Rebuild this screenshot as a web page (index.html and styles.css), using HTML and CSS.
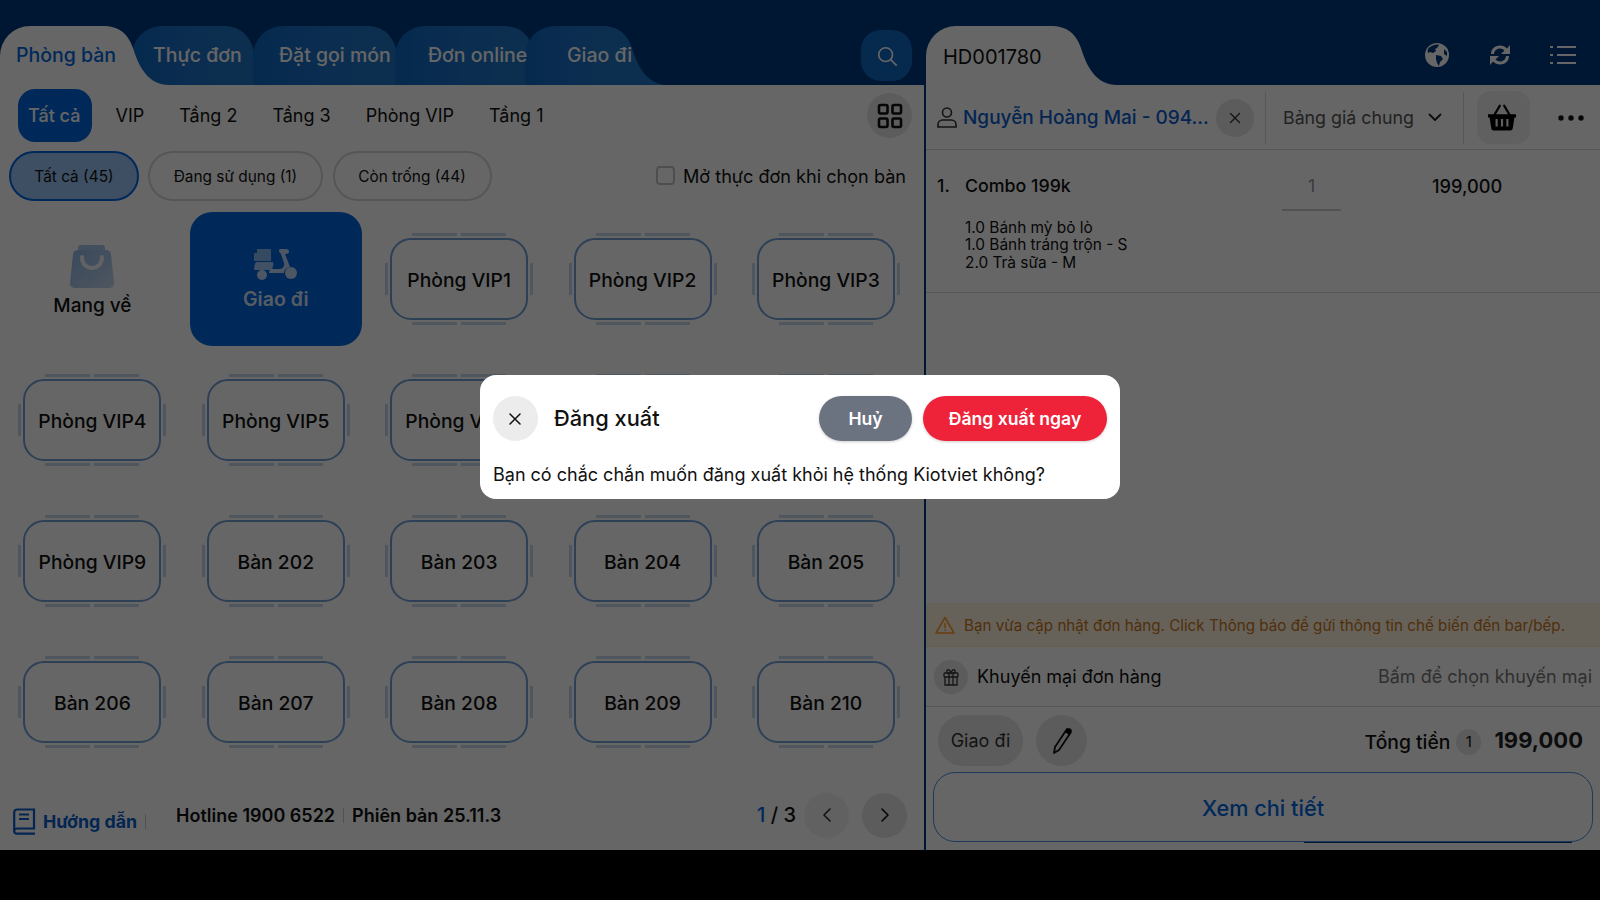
FILE: index.html
```html
<!DOCTYPE html>
<html lang="vi">
<head>
  <meta charset="UTF-8">
  <meta name="viewport" content="width=device-width, initial-scale=1">
  <title>Đăng xuất</title>
  <link rel="stylesheet" href="styles.css">
</head>
<body>
  <div class="app">
    <section class="left">
      <header class="topbar">
        <nav class="tabs">
          <a class="tab tab-active tab-room"><span>Phòng bàn</span><svg class="tab-cap" viewBox="0 0 67 59"><path d="M0 0C18 0 26 8 31 22C37 42 47 59 67 59L0 59Z"/></svg></a>
          <a class="tab tab-menu"><span>Thực đơn</span><svg class="tab-cap" viewBox="0 0 67 59"><path d="M0 0C18 0 26 8 31 22C37 42 47 59 67 59L0 59Z"/></svg></a>
          <a class="tab tab-order"><span>Đặt gọi món</span><svg class="tab-cap" viewBox="0 0 67 59"><path d="M0 0C18 0 26 8 31 22C37 42 47 59 67 59L0 59Z"/></svg></a>
          <a class="tab tab-online"><span>Đơn online</span><svg class="tab-cap" viewBox="0 0 67 59"><path d="M0 0C18 0 26 8 31 22C37 42 47 59 67 59L0 59Z"/></svg></a>
          <a class="tab tab-delivery"><span>Giao đi</span><svg class="tab-cap" viewBox="0 0 67 59"><path d="M0 0C18 0 26 8 31 22C37 42 47 59 67 59L0 59Z"/></svg></a>
        </nav>
        <button class="search-btn">
          <svg width="22" height="22" viewBox="0 0 24 24" fill="none" stroke="#fff" stroke-width="1.8" stroke-linecap="round"><circle cx="10.5" cy="10.5" r="7.5"/><path d="M16 16l6 6"/></svg>
        </button>
      </header>

      <div class="floors">
        <a class="floor floor-active">Tất cả</a>
        <a class="floor">VIP</a>
        <a class="floor">Tầng 2</a>
        <a class="floor">Tầng 3</a>
        <a class="floor">Phòng VIP</a>
        <a class="floor">Tầng 1</a>
        <button class="grid-btn">
          <svg width="26" height="26" viewBox="0 0 26 26" fill="none" stroke="#111" stroke-width="2.6"><rect x="2" y="2" width="8.5" height="8.5" rx="1.5"/><rect x="15.5" y="2" width="8.5" height="8.5" rx="1.5"/><rect x="2" y="15.5" width="8.5" height="8.5" rx="1.5"/><rect x="15.5" y="15.5" width="8.5" height="8.5" rx="1.5"/></svg>
        </button>
      </div>

      <div class="filters">
        <a class="chip chip-active chip-all">Tất cả (45)</a>
        <a class="chip chip-used">Đang sử dụng (1)</a>
        <a class="chip chip-free">Còn trống (44)</a>
        <label class="open-menu"><span class="checkbox"></span>Mở thực đơn khi chọn bàn</label>
      </div>

      <div class="tables">
        <div class="cell cell-takeaway">
          <svg width="44" height="43" viewBox="0 0 44 43">
            <defs><linearGradient id="bag" x1="0" y1="0" x2="1" y2="1"><stop offset="0" stop-color="#8fb6e6"/><stop offset="1" stop-color="#c4d6ec"/></linearGradient></defs>
            <path d="M8 8V3a3 3 0 0 1 3-3h21a3 3 0 0 1 3 3v5z" fill="#a9c6ea"/>
            <path d="M8 5h28a5 5 0 0 1 5 4.500L44 38a4.500 4.500 0 0 1-4.500 5H4.500A4.500 4.500 0 0 1 0 38L3 9.500A5 5 0 0 1 8 5z" fill="url(#bag)"/>
            <path d="M12 12c0 7 4.500 11 10 11s10-4 10-11" fill="none" stroke="#f2f5f9" stroke-width="4" stroke-linecap="round"/>
          </svg>
          <span>Mang về</span>
        </div>
        <div class="cell cell-delivery">
          <svg width="44" height="32" viewBox="0 0 44 32" fill="#fff" opacity=".75">
            <path d="M3 1h14v12H3z" opacity=".7"/>
            <path d="M0 5h3v8H0z" opacity=".7"/>
            <path d="M3 14h15c1 0 1.500 1 1.500 2L18 22H0c0-4 1-8 3-8z" opacity=".85"/>
            <circle cx="8" cy="27" r="5"/>
            <circle cx="37" cy="25" r="6"/>
            <path d="M27 1h5c2 0 3 1 3 2.500S34 6 32 6h-1l5 13-3 1c-2 1-3 3-3 5H15c0-2 1-3 2-4h9c3 0 5-3 4-6l-3-9c-1-1-2-2-2-3.500S26 1 27 1z"/>
          </svg>
          <span>Giao đi</span>
        </div>
        <div class="cell"><div class="table">Phòng VIP1</div></div>
        <div class="cell"><div class="table">Phòng VIP2</div></div>
        <div class="cell"><div class="table">Phòng VIP3</div></div>
        <div class="cell"><div class="table">Phòng VIP4</div></div>
        <div class="cell"><div class="table">Phòng VIP5</div></div>
        <div class="cell"><div class="table">Phòng VIP6</div></div>
        <div class="cell"><div class="table">Phòng VIP7</div></div>
        <div class="cell"><div class="table">Phòng VIP8</div></div>
        <div class="cell"><div class="table">Phòng VIP9</div></div>
        <div class="cell"><div class="table">Bàn 202</div></div>
        <div class="cell"><div class="table">Bàn 203</div></div>
        <div class="cell"><div class="table">Bàn 204</div></div>
        <div class="cell"><div class="table">Bàn 205</div></div>
        <div class="cell"><div class="table">Bàn 206</div></div>
        <div class="cell"><div class="table">Bàn 207</div></div>
        <div class="cell"><div class="table">Bàn 208</div></div>
        <div class="cell"><div class="table">Bàn 209</div></div>
        <div class="cell"><div class="table">Bàn 210</div></div>
      </div>

      <footer class="left-foot">
        <a class="guide">
          <svg width="23" height="27" viewBox="0 0 23 27" fill="none" stroke="#0a5ccc" stroke-width="2.200"><path d="M4 1.500h17v19H4a2.800 2.800 0 0 0-2.800 2.800V4.300A2.800 2.800 0 0 1 4 1.500z"/><path d="M1.200 23c0 1.500 1.300 2.700 2.800 2.700h18"/><path d="M6 6.500h10M6 11h10"/></svg>
          <span>Hướng dẫn</span>
        </a>
        <span class="pipe pipe-guide"></span>
        <span class="info">Hotline 1900 6522</span>
        <span class="pipe"></span>
        <span class="info">Phiên bản 25.11.3</span>
        <div class="pager">
          <span class="page-no"><b>1</b> / 3</span>
          <button class="page-btn page-prev"><svg width="12" height="18" viewBox="0 0 12 18" fill="none" stroke="#333" stroke-width="1.600" stroke-linecap="round" stroke-linejoin="round"><path d="M9 3L3 9l6 6"/></svg></button>
          <button class="page-btn"><svg width="12" height="18" viewBox="0 0 12 18" fill="none" stroke="#111" stroke-width="1.600" stroke-linecap="round" stroke-linejoin="round"><path d="M3 3l6 6-6 6"/></svg></button>
        </div>
      </footer>
    </section>

    <section class="right">
      <header class="topbar">
        <div class="bill-tab">HD001780<svg class="bill-cap" viewBox="0 0 67 59"><path d="M0 0C18 0 26 8 31 22C37 42 47 59 67 59L0 59Z"/></svg></div>
        <div class="top-icons">
          <svg width="26" height="26" viewBox="0 0 26 26"><circle cx="13" cy="13" r="12" fill="#fff"/><path d="M6 5c3-2 7-3 9-2l-2 3-2 1 1 2-3 2-3-1-2 1C3 8 4 6 6 5zM12 13l5 1 2 3-3 3-1 4-2-3-1-4zM20 7l3 3v4l-3-2z" fill="#003a80"/></svg>
          <svg width="26" height="26" viewBox="0 0 26 26" fill="#fff"><path d="M4 12C4 7 8 3.500 13 3.500c3 0 5 1 7 3L23 3v9h-9l3.500-3.500c-1.200-1.300-2.800-2-4.500-2-3.500 0-5.500 2.300-6 5.500zM22 14c0 5-4 8.500-9 8.500-3 0-5-1-7-3L3 23v-9h9l-3.500 3.500c1.200 1.300 2.800 2 4.500 2 3.500 0 5.500-2.300 6-5.500z"/></svg>
          <svg width="26" height="22" viewBox="0 0 26 22" fill="none" stroke="#fff" stroke-width="2"><path d="M7 3h19M7 11h19M7 19h19"/><path d="M0 3h3M0 11h3M0 19h3"/></svg>
        </div>
      </header>

      <div class="customer">
        <svg class="person" width="20" height="21" viewBox="0 0 20 21" fill="none" stroke="#333" stroke-width="1.600"><circle cx="10" cy="5.500" r="4.500"/><path d="M1 20v-2.500C1 15 3 13 5.500 13h9c2.500 0 4.500 2 4.500 4.500V20z"/></svg>
        <span class="cust-name">Nguyễn Hoàng Mai - 094...</span>
        <button class="cust-clear"><svg width="12" height="12" viewBox="0 0 12 12" stroke="#333" stroke-width="1.400" stroke-linecap="round"><path d="M1.500 1.500l9 9M10.500 1.500l-9 9"/></svg></button>
        <div class="price-book">
          <span>Bảng giá chung</span>
          <svg width="14" height="9" viewBox="0 0 14 9" fill="none" stroke="#222" stroke-width="1.800" stroke-linecap="round" stroke-linejoin="round"><path d="M1.500 1.500L7 7l5.500-5.500"/></svg>
        </div>
        <button class="basket-btn">
          <svg width="28" height="28" viewBox="0 0 26 26"><path d="M6 10l5-8.500M20 10l-5-8.500" stroke="#000" stroke-width="2" fill="none" stroke-linecap="round"/><path d="M0 9.500h26v3h-1.500l-1.500 10a2 2 0 0 1-2 2H5a2 2 0 0 1-2-2l-1.500-10H0z"/><path d="M8 14v7M13 14v7M18 14v7" stroke="#eee" stroke-width="2"/></svg>
        </button>
        <svg class="dots" width="26" height="6" viewBox="0 0 26 6" fill="#111"><circle cx="3" cy="3" r="2.700"/><circle cx="13" cy="3" r="2.700"/><circle cx="23" cy="3" r="2.700"/></svg>
      </div>

      <div class="order-line">
        <div class="line-main">
          <span class="line-no">1.</span>
          <span class="line-name">Combo 199k</span>
          <span class="line-qty">1</span>
          <span class="line-price">199,000</span>
        </div>
        <div class="line-sub">
          <div>1.0 Bánh mỳ bỏ lò</div>
          <div>1.0 Bánh tráng trộn - S</div>
          <div>2.0 Trà sữa - M</div>
        </div>
      </div>

      <div class="order-space"></div>

      <div class="notice">
        <svg width="20" height="18" viewBox="0 0 20 18" fill="none" stroke="#ff9a1f" stroke-width="1.500" stroke-linejoin="round"><path d="M10 1.500L19 17H1z"/><path d="M10 7v5M10 13.500v1.500"/></svg>
        <span>Bạn vừa cập nhật đơn hàng. Click Thông báo để gửi thông tin chế biến đến bar/bếp.</span>
      </div>

      <div class="promo">
        <span class="gift"><svg width="16" height="18" viewBox="0 0 16 18" fill="none" stroke="#333" stroke-width="1.300"><rect x="1" y="5" width="14" height="4" rx="1"/><path d="M2 9v8h12V9M6 5v12M10 5v12"/><path d="M6 5C4 5 3.500 3.500 4 2.500 4.800 1 7 1.500 8 5c1-3.500 3.200-4 4-2.500C12.500 3.500 12 5 10 5"/></svg></span>
        <span class="promo-title">Khuyến mại đơn hàng</span>
        <span class="promo-hint">Bấm để chọn khuyến mại</span>
      </div>

      <div class="totals">
        <button class="ship-btn">Giao đi</button>
        <button class="note-btn"><svg width="22" height="28" viewBox="0 0 22 28"><path d="M16 2L4 20 3 26l5-3L20 5z" fill="none" stroke="#111" stroke-width="1.800" stroke-linejoin="round"/><path d="M14 5l2-3c1-1 3-1 4 0s1 2 0 3l-2 3z"/></svg></button>
        <div class="total">
          <span class="total-label">Tổng tiền</span>
          <span class="total-count">1</span>
          <span class="total-value">199,000</span>
        </div>
      </div>

      <button class="detail-btn">Xem chi tiết</button>
    </section>
  </div>

  <div class="overlay">
    <div class="modal">
      <div class="modal-head">
        <button class="modal-close"><svg width="14" height="14" viewBox="0 0 14 14" stroke="#111" stroke-width="1.500" stroke-linecap="round"><path d="M1 2l10 10M11 2L1 12"/></svg></button>
        <h2 class="modal-title">Đăng xuất</h2>
        <button class="btn-cancel">Huỷ</button>
        <button class="btn-logout">Đăng xuất ngay</button>
      </div>
      <p class="modal-text">Bạn có chắc chắn muốn đăng xuất khỏi hệ thống Kiotviet không?</p>
    </div>
  </div>
</body>
</html>
```

FILE: styles.css
```css
:root {
  --navy: #003a80;
  --blue: #0068e0;
  --tab: #1f76c9;
  --text: #111;
  --muted: #777;
  --soft: #e6e6e6;
  --line: #d4d8dd;
  --table: #70a0d8;
  --chair: #c6d6ea;
}

* {
  box-sizing: border-box;
}

html,
body {
  margin: 0;
  height: 100%;
  background: #000;
  overflow: hidden;
}

body {
  font-family: Inter, "Noto Sans", sans-serif;
  color: var(--text);
  font-size: 18px;
}

button {
  border: none;
  padding: 0;
  font-family: inherit;
  display: flex;
  align-items: center;
  justify-content: center;
}

.app {
  display: flex;
  height: 850px;
  background: #fff;
}

.left {
  width: 924px;
  display: flex;
  flex-direction: column;
}

.right {
  flex: 1;
  min-width: 0;
  display: flex;
  flex-direction: column;
  border-left: 2px solid var(--navy);
}

.topbar {
  height: 85px;
  flex: none;
  background: var(--navy);
  display: flex;
  align-items: flex-end;
}

/* tabs */
.tabs {
  display: flex;
  height: 59px;
  flex: 1;
}

.tab {
  position: relative;
  height: 59px;
  flex: none;
  line-height: 59px;
  font-size: 19.500px;
  font-weight: 500;
  white-space: nowrap;
  color: #fff;
  background: linear-gradient(90deg, #0f66c4, var(--tab));
  border-top-left-radius: 30px;
}

.tab span {
  position: relative;
  z-index: 2;
}

.tab-cap,
.bill-cap {
  position: absolute;
  left: 100%;
  top: 0;
  width: 67px;
  height: 59px;
  margin-left: -1px;
  fill: var(--tab);
}

.tab-active {
  z-index: 5;
  color: var(--blue);
  background: #fff;
}

.tab-active .tab-cap {
  fill: #fff;
}

.tab-room { width: 103px; padding-left: 16px; margin-right: 29px; }
.tab-menu { width: 91px; padding-left: 21px; margin-right: 30px; }
.tab-order { width: 113px; padding-left: 26px; margin-right: 29px; }
.tab-online { width: 108px; padding-left: 33px; margin-right: 22px; }
.tab-delivery { width: 77px; padding-left: 42px; }

.search-btn {
  width: 51px;
  height: 51px;
  margin: 0 12px 4px 0;
  border-radius: 20px;
  background: #0f66c4;
}

/* floors */
.floors {
  display: flex;
  align-items: center;
  height: 57px;
  padding: 4px 12px 0 18px;
  flex: none;
}

.floor {
  padding: 0 17.500px;
  white-space: nowrap;
}

.floor-active {
  padding: 0 10px;
  width: 74px;
  height: 53px;
  margin-right: 6px;
  line-height: 53px;
  border-radius: 17px;
  background: var(--blue);
  color: #fff;
  font-weight: 500;
}

.grid-btn {
  margin-left: auto;
  width: 45px;
  height: 45px;
  border-radius: 50%;
  background: var(--soft);
}

/* status chips */
.filters {
  display: flex;
  align-items: center;
  height: 51px;
  margin-top: 8px;
  padding: 0 18px 0 9px;
  flex: none;
}

.chip {
  height: 50px;
  line-height: 48px;
  border: 2px solid #d8d8d8;
  border-radius: 25px;
  font-size: 15.400px;
  text-align: center;
  white-space: nowrap;
}

.chip-active {
  background: #9cc6f8;
  border-color: var(--blue);
}

.chip-all { width: 130px; margin-right: 9px; }
.chip-used { width: 175px; margin-right: 9.500px; }
.chip-free { width: 159px; }

.open-menu {
  margin-left: auto;
  display: flex;
  align-items: center;
  gap: 8px;
  font-size: 18.100px;
  white-space: nowrap;
}

.checkbox {
  width: 19px;
  height: 19px;
  border: 2px solid #c4c4c4;
  border-radius: 4px;
  background: #fff;
}

/* table grid */
.tables {
  display: grid;
  grid-template-columns: repeat(5, 172px);
  grid-auto-rows: 134px;
  column-gap: 11.400px;
  row-gap: 7px;
  padding: 0 0 0 6.400px;
  margin-top: 11px;
  flex: none;
}

.cell {
  display: flex;
  flex-direction: column;
  align-items: center;
  justify-content: center;
}

.cell-takeaway {
  gap: 6px;
  font-size: 19px;
  font-weight: 500;
  padding-top: 3px;
}

.cell-delivery {
  gap: 7px;
  border-radius: 22px;
  background: var(--blue);
  color: rgba(255, 255, 255, 0.85);
  font-size: 19.500px;
  font-weight: 600;
  padding-top: 1px;
}

.table {
  position: relative;
  width: 138px;
  height: 82px;
  display: flex;
  align-items: center;
  justify-content: center;
  padding-top: 1px;
  border: 2px solid var(--table);
  border-radius: 21px;
  font-size: 19.300px;
  font-weight: 500;
  white-space: nowrap;
}

.table::before {
  content: "";
  position: absolute;
  top: -7px;
  bottom: -7px;
  left: 20px;
  right: 20px;
  background:
    linear-gradient(90deg, var(--chair) 48%, transparent 48% 52%, var(--chair) 52%) top / 100% 3px no-repeat,
    linear-gradient(90deg, var(--chair) 48%, transparent 48% 52%, var(--chair) 52%) bottom / 100% 3px no-repeat;
}

.table::after {
  content: "";
  position: absolute;
  top: 23px;
  bottom: 23px;
  left: -7px;
  right: -7px;
  background:
    linear-gradient(var(--chair), var(--chair)) left / 3px 100% no-repeat,
    linear-gradient(var(--chair), var(--chair)) right / 3px 100% no-repeat;
}

/* left footer */
.left-foot {
  margin-top: auto;
  height: 70px;
  display: flex;
  align-items: center;
  padding: 0 17px 0 13px;
  flex: none;
}

.guide {
  display: flex;
  align-items: center;
  gap: 7px;
  margin-top: 12px;
  color: #0a5ccc;
  font-size: 17.800px;
  font-weight: 700;
}

.pipe {
  width: 1px;
  height: 15px;
  margin: 0 8px;
  background: #ccc;
}

.pipe-guide {
  margin: 12px 30px 0 8px;
}

.info {
  font-weight: 600;
  font-size: 18px;
  white-space: nowrap;
}

.pager {
  margin-left: auto;
  display: flex;
  align-items: center;
}

.page-no {
  font-size: 20px;
  font-weight: 500;
  margin-right: 8px;
}

.page-no b {
  font-weight: 500;
  color: var(--blue);
}

.page-btn {
  width: 45px;
  height: 45px;
  border-radius: 50%;
  background: var(--soft);
}

.page-prev {
  background: #f3f3f3;
  margin-right: 13px;
}

/* right panel */
.bill-tab {
  position: relative;
  width: 125px;
  height: 59px;
  line-height: 62px;
  padding-left: 17px;
  background: #fff;
  border-top-left-radius: 30px;
  font-size: 20px;
}

.bill-cap {
  fill: #fff;
}

.top-icons {
  margin-left: auto;
  height: 59px;
  display: flex;
  align-items: center;
  gap: 37px;
  padding: 0 24px 2px 0;
}

.customer {
  height: 65px;
  flex: none;
  display: flex;
  align-items: center;
  padding: 1px 0 0 11px;
  border-bottom: 1px solid var(--line);
}

.person {
  flex: none;
}

.cust-name {
  margin-left: 6px;
  width: 246px;
  flex: none;
  color: #0a5ccc;
  font-size: 19px;
  font-weight: 500;
  white-space: nowrap;
}

.cust-clear {
  margin-left: 7px;
  width: 38px;
  height: 38px;
  border-radius: 50%;
  background: var(--soft);
  flex: none;
}

.price-book {
  margin-left: 11px;
  width: 199px;
  height: 52px;
  flex: none;
  display: flex;
  align-items: center;
  gap: 14px;
  padding-left: 17px;
  border-left: 1px solid var(--line);
  border-right: 1px solid var(--line);
  color: #555;
  font-size: 17.800px;
}

.basket-btn {
  margin-left: 13px;
  width: 53px;
  height: 53px;
  padding-right: 3px;
  border-radius: 14px;
  background: #f0f0f0;
  flex: none;
}

.dots {
  margin-left: 28px;
  flex: none;
}

.order-line {
  height: 143px;
  flex: none;
  padding: 0 0 0 11px;
  border-bottom: 1px solid var(--line);
}

.line-main {
  display: flex;
  align-items: flex-start;
  height: 62px;
  padding-top: 11px;
  font-weight: 500;
  font-size: 17.800px;
  line-height: 50px;
}

.line-no {
  width: 28px;
}

.line-name {
  width: 317px;
}

.line-qty {
  width: 59px;
  height: 50px;
  text-align: center;
  color: #999;
  font-weight: 400;
  border-bottom: 2px solid #ccc;
}

.line-price {
  margin-left: 91px;
  font-size: 18.200px;
}

.line-sub {
  margin-top: 6.500px;
  padding-left: 28px;
  font-size: 15.400px;
  line-height: 17.500px;
}

.order-space {
  flex: 1;
}

.notice {
  height: 44px;
  flex: none;
  display: flex;
  align-items: center;
  gap: 9px;
  padding: 1px 0 0 9px;
  background: #fff5e0;
  color: #c9761a;
  font-size: 15.200px;
  white-space: nowrap;
  border-bottom: 1px solid #fbeeca;
}

.promo {
  height: 60px;
  flex: none;
  display: flex;
  align-items: center;
  padding: 0 8px 0 9px;
  border-bottom: 1px solid var(--line);
}

.gift {
  width: 34px;
  height: 34px;
  margin-left: -1px;
  margin-right: 9px;
  border-radius: 50%;
  background: var(--soft);
  display: flex;
  align-items: center;
  justify-content: center;
}

.promo-hint {
  margin-left: auto;
  color: #777;
}

.totals {
  height: 65px;
  flex: none;
  display: flex;
  align-items: center;
  padding: 2px 17px 0 12px;
}

.ship-btn {
  width: 85px;
  height: 51px;
  border-radius: 25px;
  background: var(--soft);
  color: #333;
  font-size: 18px;
}

.note-btn {
  width: 51px;
  height: 51px;
  margin-left: 13px;
  border-radius: 50%;
  background: var(--soft);
}

.total {
  margin-left: auto;
  display: flex;
  align-items: center;
}

.total-label {
  font-size: 19.300px;
  font-weight: 500;
  margin-top: 3px;
}

.total-count {
  width: 25px;
  height: 26px;
  margin: 3px 13px 0 6px;
  line-height: 26px;
  border-radius: 50%;
  background: var(--soft);
  text-align: center;
  font-size: 15px;
}

.total-value {
  margin-top: -2px;
  font-size: 22px;
  font-weight: 700;
  color: #222;
}

.detail-btn {
  position: relative;
  flex: none;
  height: 70px;
  margin: 0 7px 8px;
  padding-top: 1px;
  border: 1.500px solid #4b8fe0;
  border-radius: 22px;
  background: #fff;
  color: var(--blue);
  font-size: 21.700px;
  font-weight: 500;
}

.detail-btn::after {
  content: "";
  position: absolute;
  left: 370px;
  right: 20px;
  bottom: -2px;
  height: 1.500px;
  background: var(--navy);
}

/* logout dialog */
.overlay {
  position: fixed;
  inset: 0;
  z-index: 10;
  background: rgba(0, 0, 0, 0.6);
  display: flex;
  align-items: flex-start;
  justify-content: center;
  padding-top: 375px;
}

.modal {
  width: 640px;
  height: 124px;
  padding: 21px 13px 0;
  border-radius: 16px;
  background: #fff;
}

.modal-head {
  display: flex;
  align-items: center;
}

.modal-close {
  width: 45px;
  height: 45px;
  border-radius: 50%;
  background: #ececec;
}

.modal-title {
  margin: -2px auto 0 16px;
  font-size: 21.800px;
  font-weight: 500;
}

.btn-cancel,
.btn-logout {
  height: 45px;
  border-radius: 23px;
  color: #fff;
  font-size: 17.600px;
  font-weight: 600;
  box-shadow: 0 1px 3px rgba(0, 0, 0, 0.2);
}

.btn-cancel {
  width: 93px;
  background: #6b7280;
}

.btn-logout {
  width: 184px;
  margin-left: 11px;
  background: #ee2238;
}

.modal-text {
  margin: 22px 0 0;
  font-size: 18px;
  line-height: 24px;
}
```
